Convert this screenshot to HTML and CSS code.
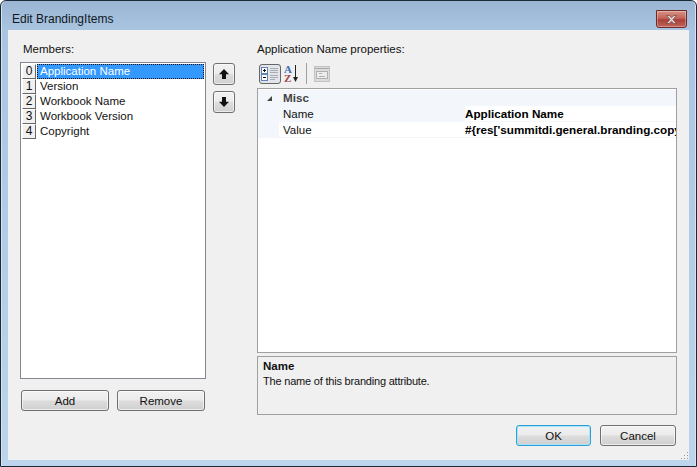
FILE: index.html
```html
<!DOCTYPE html>
<html lang="en">
<head>
<meta charset="utf-8">
<title>Edit BrandingItems</title>
<link rel="stylesheet" href="styles.css">
</head>
<body>
<div class="window">
  <header class="titlebar">
    <span class="title">Edit BrandingItems</span>
    <button class="close" aria-label="Close">
      <svg width="15" height="11" viewBox="0 0 15 11"><path d="M2.5 1.5h2.6l2.4 2.3 2.4-2.3h2.6l-3.6 4 3.6 4h-2.6l-2.4-2.3-2.4 2.3h-2.6l3.6-4z" fill="#e8e2e2" stroke="#7a4a48" stroke-width=".8"/></svg>
    </button>
  </header>
  <main class="client">
    <div class="content">
      <section class="left">
        <div class="label">Members:</div>
        <ul class="list">
          <li class="item"><span class="idx">0</span><span class="name selected">Application Name</span></li>
          <li class="item"><span class="idx">1</span><span class="name">Version</span></li>
          <li class="item"><span class="idx">2</span><span class="name">Workbook Name</span></li>
          <li class="item"><span class="idx">3</span><span class="name">Workbook Version</span></li>
          <li class="item"><span class="idx">4</span><span class="name">Copyright</span></li>
        </ul>
        <div class="list-actions">
          <button class="btn wide">Add</button>
          <button class="btn wide">Remove</button>
        </div>
      </section>
      <section class="movers">
        <button class="btn move" aria-label="Move up">
          <svg width="12" height="12" viewBox="0 0 12 12"><path d="M6 1l5 5.2H8V11H4V6.2H1z" fill="#111"/></svg>
        </button>
        <button class="btn move" aria-label="Move down">
          <svg width="12" height="12" viewBox="0 0 12 12"><path d="M6 11L1 5.8h3V1h4v4.8h3z" fill="#111"/></svg>
        </button>
      </section>
      <section class="right">
        <div class="label">Application Name properties:</div>
        <div class="toolbar">
          <button class="tool active" aria-label="Categorized">
            <svg width="18" height="16" viewBox="0 0 18 16">
              <rect x=".5" y="1.5" width="6" height="6" fill="#fff" stroke="#5f83b5"/>
              <rect x=".5" y="8.500" width="6" height="6" fill="#fff" stroke="#5f83b5"/>
              <path d="M2 4.500h3M3.500 3v3M2 11.500h3" stroke="#111"/>
              <path d="M9 2.500h8M9 4.500h8M9 6.500h8M9 9.500h8M9 11.500h8M9 13.500h5" stroke="#a9adb3"/>
            </svg>
          </button>
          <svg class="az" width="16" height="20" viewBox="0 0 16 20">
            <text x="1" y="9" class="az-a">A</text>
            <text x="1" y="18" class="az-z">Z</text>
            <path d="M12.500 1v14" stroke="#222" fill="none"/>
            <path d="M10 13h5l-2.500 5z" fill="#222"/>
          </svg>
          <span class="sep"></span>
          <svg class="pages" width="16" height="16" viewBox="0 0 16 16">
            <rect x=".5" y=".5" width="15" height="15" fill="#dcdcdc" stroke="#c2c2c2"/>
            <path d="M1 2.500h14" stroke="#a8a8a8"/>
            <rect x="2.500" y="5.500" width="11" height="7" fill="#ededed" stroke="#b0b0b0"/>
            <path d="M5 7.500h3M5 10.500h6" stroke="#b0b0b0"/>
          </svg>
        </div>
        <div class="grid">
          <div class="row cat"><span class="gutter"><svg width="7" height="7" viewBox="0 0 7 7"><path d="M6 1v5H1z" fill="#444"/></svg></span><span class="catname">Misc</span></div>
          <div class="row prop sel"><span class="gutter"></span><span class="key">Name</span><span class="val">Application Name</span></div>
          <div class="row prop"><span class="gutter"></span><span class="key">Value</span><span class="val">#{res['summitdi.general.branding.copy</span></div>
        </div>
        <div class="help">
          <strong class="help-title">Name</strong>
          <span class="help-text">The name of this branding attribute.</span>
        </div>
      </section>
    </div>
    <footer class="footer">
      <button class="btn foot default">OK</button>
      <button class="btn foot">Cancel</button>
    </footer>
    <svg class="grip" width="9" height="9" viewBox="0 0 9 9"><path d="M7 1h1v1H7zM4 4h1v1H4zM7 4h1v1H7zM1 7h1v1H1zM4 7h1v1H4zM7 7h1v1H7z" fill="#9a9a9a"/></svg>
  </main>
</div>
</body>
</html>
```
FILE: styles.css
```css
* { box-sizing: border-box; }
html, body { margin: 0; padding: 0; background: #fff; }
body { font: 11.5px/15px "Liberation Sans", Arial, sans-serif; color: #111; }
button { font: inherit; color: inherit; padding: 0; margin: 0; cursor: default; }

.window {
  width: 697px;
  height: 467px;
  display: flex;
  flex-direction: column;
  border: 1px solid #1c2a38;
  border-radius: 6px 6px 0 0;
  background: linear-gradient(180deg, #9ab6d3 0, #a9c5e2 30px, #bcd5ec 100%);
  padding: 0 7px 6px 7px;
  box-shadow: inset 1px 0 0 #d4e4f2, inset -1px 0 0 #d4e4f2;
}

.titlebar {
  height: 29px;
  flex: none;
  display: flex;
  align-items: flex-start;
  justify-content: space-between;
  margin: 0 -6px 0 0;
  padding-left: 4px;
}
.title { font-size: 12px; line-height: 16px; margin-top: 10px; color: #10171f; }
.close {
  width: 31px;
  height: 18px;
  margin: 9px 8px 0 0;
  display: flex;
  align-items: center;
  justify-content: center;
  border: 1px solid #6e2a25;
  border-radius: 0 0 3px 3px;
  background: linear-gradient(180deg, #d89488 0, #c46258 45%, #a8403a 55%, #c2645a 100%);
  box-shadow: inset 0 0 0 1px rgba(255,255,255,.3);
}

.client {
  position: relative;
  flex: 1;
  min-height: 0;
  background: #f0f0f0;
  padding: 11px 11px 13px 12px;
  display: flex;
  flex-direction: column;
}
.content { display: flex; height: 374px; flex: none; }

.left { width: 186px; display: flex; flex-direction: column; }
.label { height: 21px; padding: 0 0 0 3px; line-height: 16px; }
.right .label { padding-left: 0; }

.list {
  list-style: none;
  margin: 0;
  padding: 1px;
  height: 317px;
  flex: none;
  background: #fff;
  border: 1px solid #828790;
}
.item { display: flex; height: 15px; }
.idx {
  width: 14px;
  height: 15px;
  flex: none;
  text-align: center;
  font-size: 12px;
  background: #f0f0f0;
  border: 1px solid;
  border-color: #fff #666 #666 #fff;
  line-height: 13px;
}
.name { flex: 1; padding-left: 3px; margin-left: 1px; line-height: 15px; }
.selected { background: #3399ff; color: #fff; outline: 1px dotted #111; outline-offset: -1px; }

.list-actions { display: flex; gap: 8px; padding: 11px 1px 0 1px; }

.btn {
  border: 1px solid #707070;
  border-radius: 3px;
  background: linear-gradient(180deg, #f2f2f2 0, #ebebeb 48%, #dddddd 52%, #cfcfcf 100%);
  box-shadow: inset 0 0 0 1px rgba(255,255,255,.6);
  display: flex;
  align-items: center;
  justify-content: center;
}
.wide, .foot { padding-top: 1px; }
.wide { width: 88px; height: 21px; }
.movers { width: 22px; margin-left: 7px; padding-top: 22px; display: flex; flex-direction: column; gap: 6px; flex: none; }
.move { width: 22px; height: 22px; }

.right { width: 420px; margin-left: 22px; display: flex; flex-direction: column; flex: none; }
.toolbar { height: 26px; display: flex; align-items: center; padding: 0 0 3px 2px; flex: none; }
.tool { width: 22px; height: 20px; display: flex; align-items: center; justify-content: center; }
.tool.active { border: 1px solid #666; border-radius: 3px; background: #e2e5e9; }
.az { margin-left: 2px; }
.az-a, .az-z { font: 11px "Liberation Serif", serif; font-weight: bold; }
.az-a { fill: #3f6fb8; }
.az-z { fill: #a04848; }
.sep { width: 1px; height: 21px; background: #a0a0a0; margin: 0 7px 0 7px; }

.grid {
  height: 265px;
  flex: none;
  background: #fff;
  border: 1px solid #a0a0a0;
  padding-top: 1px;
  overflow: hidden;
}
.row { display: flex; height: 16px; line-height: 16px; white-space: nowrap; }
.gutter { width: 21px; flex: none; background: #f3f6fb; display: flex; align-items: center; justify-content: center; padding-left: 2px; }
.cat { background: #f3f6fb; }
.catname { padding-left: 4px; font-weight: bold; font-size: 11.7px; color: #444; }
.prop { border-bottom: 1px solid #f3f6fb; }
.key { width: 186px; flex: none; padding-left: 4px; }
.sel .key { background: #f3f6fb; }
.val { flex: 1; font-weight: bold; font-size: 11.7px; overflow: hidden; color: #000; }

.help {
  margin-top: 3px;
  height: 59px;
  flex: none;
  border: 1px solid #a0a0a0;
  padding: 2px 5px;
  display: flex;
  flex-direction: column;
  align-items: flex-start;
}
.help-title { line-height: 15px; }
.help-text { font-size: 11px; letter-spacing: -0.2px; }

.footer { display: flex; justify-content: flex-end; gap: 9px; margin: 10px 2px 0 0; }
.foot { width: 76px; height: 21px; }
.default { width: 75px; border-color: #2c9fd8; box-shadow: inset 0 0 0 1px #a8e4fb; }
.grip { position: absolute; right: 0; bottom: 0; }
```
